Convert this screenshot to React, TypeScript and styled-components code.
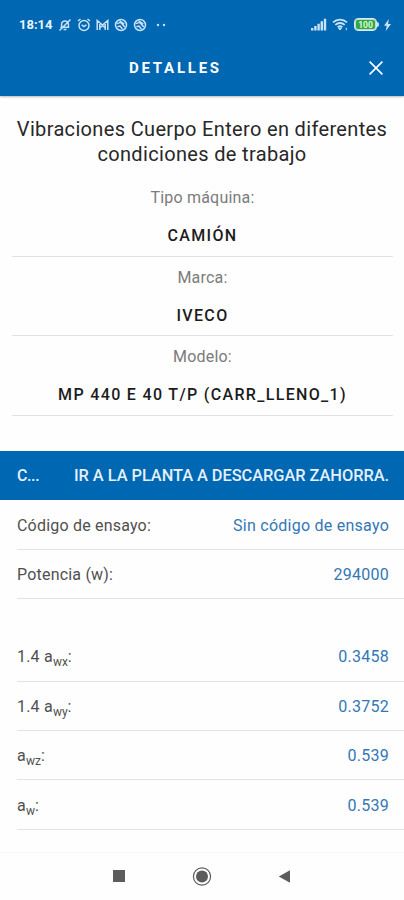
import React from "react";
import styled, { createGlobalStyle } from "styled-components";

const BLUE = "#0067b3";

const GlobalStyle = createGlobalStyle`
  * { box-sizing: border-box; }
  body { margin: 0; background: #fefefe; font-family: Roboto, "Liberation Sans", sans-serif; }
`;

const Screen = styled.div`
  width: 100%;
  height: 900px;
  display: flex;
  flex-direction: column;
  background: #fefefe;
  overflow: hidden;
`;

const Header = styled.header`
  flex: none;
  height: 96px;
  background: ${BLUE};
  color: #fff;
  box-shadow: 0 1px 2px rgba(0, 0, 0, 0.28);
`;

const StatusBar = styled.div`
  height: 40px;
  padding: 9px 13px 0 19px;
  display: flex;
  align-items: center;
  justify-content: space-between;
  color: #c9e2f7;
`;

const Clock = styled.span`
  width: 34px;
  font-size: 13px;
  font-weight: 700;
  letter-spacing: 0;
  white-space: nowrap;
  color: #e8f4ff;
`;

const StatusGroup = styled.div<{ $gap: number }>`
  display: flex;
  align-items: center;
  gap: ${(p) => p.$gap}px;
  svg { display: block; flex: none; }
`;

const TitleBar = styled.div`
  height: 56px;
  padding: 0 20px 0 54px;
  display: flex;
  align-items: center;
`;

const ScreenTitle = styled.h1`
  flex: 1;
  margin: 0;
  padding-left: 75px;
  font-size: 15px;
  line-height: 20px;
  font-weight: 700;
  letter-spacing: 2.75px;
`;

const CloseButton = styled.button`
  width: 16px;
  height: 16px;
  padding: 0;
  border: 0;
  background: none;
  color: #fff;
  svg { display: block; }
`;

const Content = styled.main`
  flex: 1;
  display: flex;
  flex-direction: column;
`;

const Heading = styled.h2`
  margin: 21px 0 0;
  font-size: 20px;
  line-height: 25px;
  font-weight: 400;
  letter-spacing: 0.34px;
  text-align: center;
  white-space: nowrap;
  color: #282828;
`;

const Machine = styled.dl`
  margin: 10px 11px 0 12px;
  display: flex;
  flex-direction: column;
`;

const Field = styled.div`
  height: 79.5px;
  display: flex;
  flex-direction: column;
  align-items: center;
  border-bottom: 1px solid #e3e3e3;
`;

const FieldLabel = styled.dt`
  margin-top: 11px;
  font-size: 16px;
  line-height: 20px;
  letter-spacing: 0.2px;
  color: #7b7b7b;
`;

const FieldValue = styled.dd`
  margin: 18px 0 0;
  font-size: 16px;
  line-height: 20px;
  font-weight: 500;
  letter-spacing: 1.33px;
  white-space: nowrap;
  color: #1c1c1c;
`;

const CycleBar = styled.div`
  height: 49px;
  margin-top: 35px;
  padding: 0 15px 0 17px;
  display: flex;
  align-items: center;
  justify-content: space-between;
  background: ${BLUE};
  color: #e4f0fb;
  white-space: nowrap;
`;

const CycleLabel = styled.span`
  font-size: 16px;
  font-weight: 500;
  letter-spacing: -0.4px;
`;

const CycleName = styled.span`
  font-size: 16.4px;
  font-weight: 500;
  letter-spacing: -0.05px;
`;

const Rows = styled.div<{ $offset: number }>`
  margin: ${(p) => p.$offset}px 0 0 17px;
  display: flex;
  flex-direction: column;
`;

const Row = styled.div`
  height: 49.4px;
  padding: 1px 15px 0 0;
  display: flex;
  align-items: center;
  justify-content: space-between;
  border-bottom: 1px solid #e3e3e3;
  font-size: 16px;
`;

const RowLabel = styled.span`
  letter-spacing: 0.2px;
  color: #505050;
  sub { font-size: 12px; line-height: 0; vertical-align: sub; letter-spacing: 0; }
`;

const RowValue = styled.span`
  letter-spacing: 0.25px;
  color: #3377b6;
`;

const NavBar = styled.nav`
  flex: none;
  height: 48px;
  display: flex;
  align-items: center;
  justify-content: center;
  gap: 66px;
  border-top: 1px solid #f7f7f7;
  color: #5c5c5c;
  svg { display: block; }
`;

const line = { fill: "none", stroke: "currentColor", strokeWidth: 1.5 } as const;

const MutedBell = () => (
  <svg width="14" height="14" viewBox="0 0 14 14" {...line}>
    <path d="M2.5 9.2h8.8M3.6 9V6.3a3.4 3.4 0 0 1 6.8 0V9M5.5 11.6h3M1.5 12.5l11-11" />
  </svg>
);

const AlarmClock = () => (
  <svg width="14" height="14" viewBox="0 0 14 14" {...line}>
    <circle cx="7" cy="7.5" r="5" />
    <path d="M1 3l2.5-2M13 3l-2.5-2M4.7 6.8l2 1.8 2.8-1.8" />
  </svg>
);

const MailMark = () => (
  <svg width="13" height="12" viewBox="0 0 13 12" {...line}>
    <path d="M1.2 11V1.5L6.5 6l5.3-4.5V11M3.8 11V5M9.2 11V5M3.8 9l2.7-2.5L9.2 9" />
  </svg>
);

const RoundMark = () => (
  <svg width="14" height="14" viewBox="0 0 14 14" {...line}>
    <circle cx="7" cy="7" r="5.5" />
    <path d="M2.8 5.6l4-1.2 4 4.6M5.3 2.5l5 3.5M3.4 8.8l2.6-.8 2.4 3" />
  </svg>
);

const Dots = () => (
  <svg width="14" height="4" viewBox="0 0 14 4" fill="currentColor">
    <circle cx="6" cy="2" r="1.2" />
    <circle cx="12" cy="2" r="1.2" />
  </svg>
);

const Signal = () => (
  <svg width="16" height="13" viewBox="0 0 16 13" fill="currentColor">
    <path d="M0 10h2.4v2.5H0zM3.2 8h2.4v4.5H3.2zM6.4 5.7h2.4v6.8H6.4zM9.6 3.2H12v9.3H9.6zM12.8.8h2.4v11.7h-2.4z" />
  </svg>
);

const Wifi = () => (
  <svg width="17" height="13" viewBox="0 0 17 13" {...line} strokeWidth="1.8">
    <path d="M1 4.3a10.3 10.3 0 0 1 14 0M3.3 6.8a7 7 0 0 1 9.4 0M5.7 9.2a3.6 3.6 0 0 1 4.6 0" />
    <path d="M6.6 10.2h2.8L8 12zM14.3 9.8v2.4" fill="currentColor" strokeWidth="1" />
  </svg>
);

const BatteryShell = styled.div`
  width: 23px;
  height: 13px;
  display: flex;
  align-items: center;
  justify-content: center;
  border: 1.5px solid #d5e9fa;
  border-radius: 4px;
  background: #35a645;
  box-shadow: inset 0 0 0 1px #b8dcc9;
  color: #d9ffd6;
  font-size: 8.5px;
  font-weight: 700;
  line-height: 10px;
`;

const BatteryCap = styled.i`
  width: 2px;
  height: 5px;
  border-radius: 0 2px 2px 0;
  background: #c5e0f6;
`;

const Bolt = () => (
  <svg width="7" height="12" viewBox="0 0 7 12" fill="currentColor">
    <path d="M4.8 0L0 6.7h2.7L1.8 12 7 5.1H4.1z" />
  </svg>
);

const machine = [
  ["Tipo máquina:", "CAMIÓN"],
  ["Marca:", "IVECO"],
  ["Modelo:", "MP 440 E 40 T/P (CARR_LLENO_1)"],
];

const trial = [
  ["Código de ensayo:", "Sin código de ensayo"],
  ["Potencia (w):", "294000"],
];

const readings = [
  { base: "1.4 a", sub: "wx", value: "0.3458" },
  { base: "1.4 a", sub: "wy", value: "0.3752" },
  { base: "a", sub: "wz", value: "0.539" },
  { base: "a", sub: "w", value: "0.539" },
];

export default function App() {
  return (
    <Screen>
      <GlobalStyle />
      <Header>
        <StatusBar>
          <StatusGroup $gap={5}>
            <Clock>18:14</Clock>
            <MutedBell />
            <AlarmClock />
            <MailMark />
            <RoundMark />
            <RoundMark />
            <Dots />
          </StatusGroup>
          <StatusGroup $gap={5}>
            <Signal />
            <Wifi />
            <StatusGroup $gap={0}>
              <BatteryShell>100</BatteryShell>
              <BatteryCap />
            </StatusGroup>
            <Bolt />
          </StatusGroup>
        </StatusBar>
        <TitleBar>
          <ScreenTitle>DETALLES</ScreenTitle>
          <CloseButton aria-label="Cerrar">
            <svg width="16" height="16" viewBox="0 0 16 16" fill="none" stroke="currentColor" strokeWidth="1.6">
              <path d="M1.6 1.6l12.8 12.8M14.4 1.6L1.6 14.4" />
            </svg>
          </CloseButton>
        </TitleBar>
      </Header>
      <Content>
        <Heading>
          Vibraciones Cuerpo Entero en diferentes
          <br />
          condiciones de trabajo
        </Heading>
        <Machine>
          {machine.map(([label, value]) => (
            <Field key={label}>
              <FieldLabel>{label}</FieldLabel>
              <FieldValue>{value}</FieldValue>
            </Field>
          ))}
        </Machine>
        <CycleBar>
          <CycleLabel>C...</CycleLabel>
          <CycleName>IR A LA PLANTA A DESCARGAR ZAHORRA.</CycleName>
        </CycleBar>
        <Rows $offset={1}>
          {trial.map(([label, value]) => (
            <Row key={label}>
              <RowLabel>{label}</RowLabel>
              <RowValue>{value}</RowValue>
            </Row>
          ))}
        </Rows>
        <Rows $offset={33}>
          {readings.map(({ base, sub, value }) => (
            <Row key={base + sub}>
              <RowLabel>
                {base}
                <sub>{sub}</sub>:
              </RowLabel>
              <RowValue>{value}</RowValue>
            </Row>
          ))}
        </Rows>
      </Content>
      <NavBar>
        <svg width="14" height="14" viewBox="0 0 14 14" fill="currentColor">
          <path d="M1 0h12v12H1z" />
        </svg>
        <svg width="20" height="20" viewBox="0 0 20 20" fill="none" stroke="currentColor">
          <circle cx="10" cy="9.5" r="8.6" strokeWidth="1.2" />
          <circle cx="10" cy="9.5" r="6" fill="currentColor" stroke="none" />
        </svg>
        <svg width="14" height="14" viewBox="0 0 14 14" fill="currentColor">
          <path d="M12 .2v12.6L.8 6.5z" />
        </svg>
      </NavBar>
    </Screen>
  );
}
